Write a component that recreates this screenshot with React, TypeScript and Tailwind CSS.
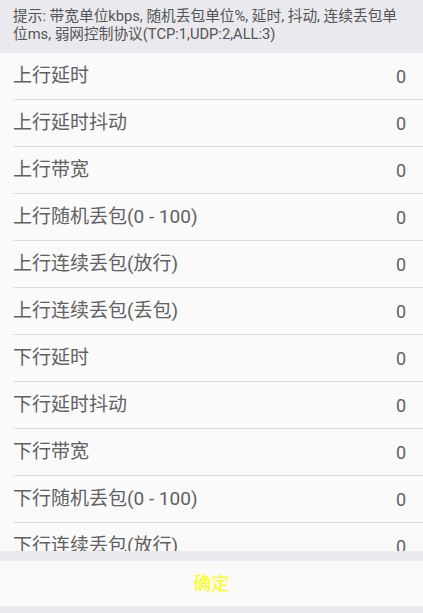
const rows = [
  "上行延时",
  "上行延时抖动",
  "上行带宽",
  "上行随机丢包(0 - 100)",
  "上行连续丢包(放行)",
  "上行连续丢包(丢包)",
  "下行延时",
  "下行延时抖动",
  "下行带宽",
  "下行随机丢包(0 - 100)",
  "下行连续丢包(放行)",
  "下行连续丢包(丢包)",
];

export default function App() {
  return (
    <div
      className="flex h-[613px] w-[423px] flex-col bg-[#e9e9ee]"
      style={{ fontFamily: 'Roboto, "Noto Sans CJK SC", sans-serif' }}
    >
      <div className="h-[53px] shrink-0 pl-[13px] pr-[20px] pt-[7px] text-[14.7px] leading-[18px] text-[#555]">
        提示: 带宽单位kbps, 随机丢包单位%, 延时, 抖动, 连续丢包单位ms, 弱网控制协议(TCP:1,UDP:2,ALL:3)
      </div>
      <div className="h-[498px] shrink-0 overflow-hidden bg-[#fafafa]">
        {rows.map((label) => (
          <div key={label} className="pl-[13px]">
            <div className="flex h-[47px] items-center justify-between border-b border-[#dcdcdc] pr-[17px] text-[19px] text-[#616161]">
              <span>{label}</span>
              <span className="text-[18px]">0</span>
            </div>
          </div>
        ))}
      </div>
      <div className="mt-[10px] flex h-[45px] shrink-0 items-center justify-center bg-[#fafafa] text-[18px] text-[#ffff00]">
        确定
      </div>
    </div>
  );
}
